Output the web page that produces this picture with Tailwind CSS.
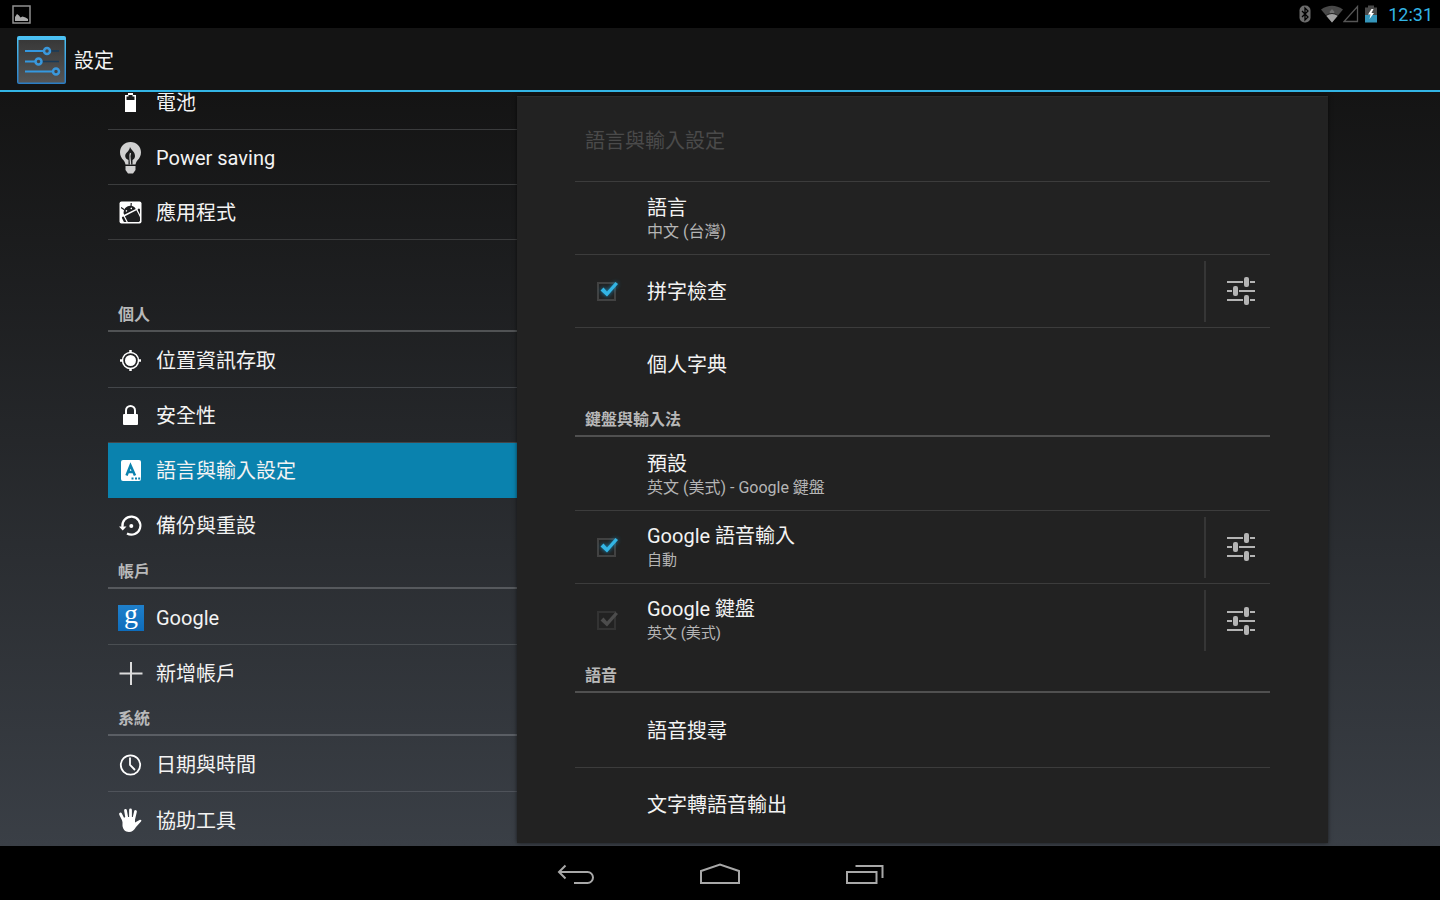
<!DOCTYPE html>
<html lang="zh-Hant">
  <head>
    <meta charset="UTF-8" />
    <meta name="viewport" content="width=device-width, initial-scale=1.0" />
    <title>設定</title>
    <script src="https://cdn.jsdelivr.net/npm/@tailwindcss/browser@4"></script>
  </head>

  <body class="flex h-screen flex-col overflow-hidden bg-black font-['Roboto','Noto_Sans_CJK_TC',sans-serif] text-xl text-[#f3f3f3]">
    <svg class="hidden">
      <symbol id="sliders" viewBox="0 0 28 30">
        <path d="M0 6h16M23 6h5M0 15h5M12 15h16M0 24h16M23 24h5" stroke="#b4b4b4" stroke-width="2" fill="none" />
        <rect x="17" y="1" width="5" height="10" rx="2" fill="#b4b4b4" />
        <rect x="6" y="10" width="5" height="10" rx="2" fill="#b4b4b4" />
        <rect x="17" y="19" width="5" height="10" rx="2" fill="#b4b4b4" />
      </symbol>
      <symbol id="tick" viewBox="0 0 24 24">
        <path d="M3.500 11.500 6.500 8.500l3.500 4L18.500 3l2.500 2L10 17.500z" fill="currentColor" />
      </symbol>
    </svg>

    <!-- status bar -->
    <div class="flex h-7 shrink-0 items-center bg-black pr-[7px] pl-3">
      <svg class="size-[19px]" viewBox="0 0 19 19">
        <rect x="1" y="1" width="17" height="17" fill="none" stroke="#909090" stroke-width="1.500" />
        <path d="M3 16v-4l2-3 2 1.500 1.500 2 2-1 3 1 2.500 1.500v2z" fill="#aaa" />
      </svg>
      <svg class="ml-auto h-[18px] w-3" viewBox="0 0 12 18">
        <rect x="0.500" y="0.500" width="11" height="17" rx="5" fill="#6c6c6c" />
        <path d="M3 6l6 6-3 3V3l3 3-6 6" fill="none" stroke="#000" stroke-width="1.300" />
      </svg>
      <svg class="ml-2.5 h-[18px] w-[22px]" viewBox="0 0 22 18">
        <path d="M0 4.500Q11-3 22 4.500L11 17.500z" fill="#484848" />
        <path d="M5 10.500Q11 6.500 17 10.500L11 17.500z" fill="#a0a0a0" />
        <path d="M8.500 7 11 4l2.500 3-1 2h-3z" fill="#707070" />
        <path d="M5 10.500Q11 6.500 17 10.500" fill="none" stroke="#222" stroke-width="1" />
      </svg>
      <svg class="h-[18px] w-4" viewBox="0 0 16 18">
        <path d="M14.500 1.500v15H1z" fill="none" stroke="#565656" stroke-width="1.300" />
      </svg>
      <svg class="ml-1.5 h-[18px] w-3" viewBox="0 0 12 18">
        <path d="M3 0.500h6v2h3V10H0V2.500h3z" fill="#4a4a4a" />
        <path d="M0 10h12v7.500H0z" fill="#3596bb" />
        <path d="M6.500 4 3 9.500h2.500L4.500 14 9 8H6.500L8.500 4z" fill="#fff" />
      </svg>
      <time class="ml-[11px] pt-0.5 text-lg leading-7 text-[#33b5e5]">12:31</time>
    </div>

    <!-- action bar -->
    <header class="flex h-16 shrink-0 items-center gap-2 border-b-2 border-[#33b5e5] bg-[#141414] pt-0.5 pl-4">
      <svg class="size-[50px]" viewBox="0 0 50 50">
        <defs>
          <linearGradient id="face" x2="0" y2="1">
            <stop offset="0" stop-color="#383838" />
            <stop offset="1" stop-color="#555" />
          </linearGradient>
          <linearGradient id="edge" x2="0" y2="1">
            <stop offset="0" stop-color="#4cc3f5" />
            <stop offset="1" stop-color="#2a7cc4" />
          </linearGradient>
        </defs>
        <rect x="1" y="1" width="49" height="48" rx="2" fill="url(#edge)" />
        <rect x="2.500" y="5" width="46" height="42.500" fill="url(#face)" />
        <path d="M30 16h13M23 26.500h20" stroke="#173a58" stroke-width="1.500" />
        <path d="M9 16h18M9 26.500h10M9 36.500h28" stroke="#3498e0" stroke-width="2" />
        <g fill="#444" stroke="#3a98dc" stroke-width="2.500">
          <circle cx="31" cy="16" r="3" />
          <circle cx="22.500" cy="26.500" r="3" />
          <circle cx="40" cy="36.500" r="3" />
        </g>
      </svg>
      <h1 class="pt-0.5">設定</h1>
    </header>

    <main class="grid min-h-0 flex-1 grid-cols-[409fr_811fr] overflow-hidden bg-linear-to-b from-[#141414] to-[#3a3f46] pr-28 pl-27">
      <!-- category list, scrolled part of a row down -->
      <nav class="-mt-[17px]">
        <a href="#" class="flex h-[55px] items-center border-b border-[#3b3c3d] pt-0.5 pl-2">
          <svg class="mr-3 size-7" viewBox="0 0 28 28">
            <path d="M12 4h5v2h3v17H9V6h3z" fill="#fff" />
            <path d="M12.500 6v1.500H10.500V11h8V7.500h-2V6z" fill="#1b1b1b" />
          </svg>
          電池
        </a>
        <a href="#" class="flex h-[55px] items-center border-b border-[#3b3c3d] pt-0.5 pl-2">
          <svg class="mr-3 h-8 w-7" viewBox="0 0 28 32">
            <path d="M14.500 0C8.500 0 4 4.500 4 10.300c0 3.500 1.500 6 3.500 8 1.200 1.200 1.500 2.700 2 4.200h10c.5-1.500.8-3 2-4.200 2-2 3.500-4.500 3.500-8C25 4.500 20.500 0 14.500 0z" fill="#d0d0d0" />
            <path d="M14 5c1 3 5 4.500 5 9 0 2-1 3.300-2.500 4v4.500h-4V18c-2-.7-3.300-2-3.300-4 0-3.500 4.300-4.500 4.800-9z" fill="#1a1b1c" />
            <path d="M14.500 11c-1.500 3.500 0 5.500 0 11.500" fill="none" stroke="#d0d0d0" stroke-width="1.300" />
            <path d="M9.500 24h10v4l-2.500 3.500h-5L9.500 28z" fill="#d0d0d0" />
          </svg>
          Power saving
        </a>
        <a href="#" class="flex h-[55px] items-center border-b border-[#3b3c3d] pt-0.5 pl-2">
          <svg class="mr-3 size-7" viewBox="0 0 28 28">
            <clipPath id="appbox"><rect x="5" y="4" width="19" height="19" rx="1" /></clipPath>
            <rect x="3.500" y="2.500" width="22" height="22" rx="2" fill="#fff" />
            <g clip-path="url(#appbox)">
              <g transform="rotate(-27 14 14)" fill="#1d1e20">
                <path d="M8 13a6.500 6 0 0 1 13 0z" />
                <path d="M10.500 8.500 8.500 5M18 8.500l2-3.500" stroke="#1d1e20" stroke-width="1.200" />
                <circle cx="11.800" cy="10.500" r="0.800" fill="#fff" />
                <circle cx="17.200" cy="10.500" r="0.800" fill="#fff" />
                <path d="M8 14.500h13V26H10a2 2 0 0 1-2-2z" />
                <rect x="4.500" y="14" width="2.300" height="9" rx="1.100" />
                <rect x="22.200" y="14" width="2.300" height="9" rx="1.100" />
              </g>
            </g>
          </svg>
          應用程式
        </a>

        <h2 class="mt-14 flex h-9 items-center border-b-2 border-[#505254] pt-1 pl-[10px] text-base font-bold text-[#b8b9ba]">個人</h2>
        <a href="#" class="flex h-14 items-center border-b border-[#43464a] pt-0.5 pl-2">
          <svg class="mr-3 size-7" viewBox="0 0 28 28">
            <circle cx="14.500" cy="13.500" r="8" fill="none" stroke="#fff" stroke-width="1.500" />
            <circle cx="14.500" cy="13.500" r="5.500" fill="#fff" />
            <path d="M14.500 3v3M14.500 21v3M4 13.500h3M22 13.500h3" stroke="#fff" stroke-width="2.500" />
          </svg>
          位置資訊存取
        </a>
        <a href="#" class="flex h-[55px] items-center border-b border-[#43464a] pt-0.5 pl-2">
          <svg class="mr-3 size-7" viewBox="0 0 28 28">
            <path d="M10 13V8.500a4.500 4.500 0 0 1 9 0V13" fill="none" stroke="#fff" stroke-width="2" />
            <rect x="7" y="12" width="15" height="11" rx="1" fill="#fff" />
          </svg>
          安全性
        </a>
        <a href="#" aria-current="page" class="flex h-[55px] items-center bg-[#0a82ae] pl-2">
          <svg class="mr-3 size-7" viewBox="0 0 28 28">
            <rect x="5" y="3" width="20" height="21" rx="2" fill="#fff" />
            <path d="M10.500 18.500 14.500 8.500l4.500 10M12 15h5.500" fill="none" stroke="#0a82ae" stroke-width="2.500" />
            <path d="M15.500 20.500h2v2h-2zM19 20.500h2v2h-2zM22.200 20.500h2v2h-2z" fill="#0a82ae" />
          </svg>
          語言與輸入設定
        </a>
        <a href="#" class="flex h-[55px] items-center pl-2">
          <svg class="mr-3 size-7" viewBox="0 0 28 28">
            <path d="M6.500 15A9 9 0 1 1 11 21.500" fill="none" stroke="#fff" stroke-width="2.200" />
            <path d="M3 14.500h7.500L6.700 18.500z" fill="#fff" />
            <circle cx="15.300" cy="14" r="2" fill="#fff" />
          </svg>
          備份與重設
        </a>

        <h2 class="flex h-9 items-center border-b-2 border-[#56595d] pt-1 pl-[10px] text-base font-bold text-[#b8b9ba]">帳戶</h2>
        <a href="#" class="flex h-14 items-center border-b border-[#4a4e52] pt-0.5 pl-2">
          <span aria-hidden="true" class="mr-3 ml-0.5 flex size-[26px] items-center justify-center bg-linear-to-b from-[#1f80cb] to-[#0d6cbb] pb-2 font-['Liberation_Serif',serif] text-[28px] leading-none text-white">g</span>
          Google
        </a>
        <a href="#" class="flex h-[55px] items-center pt-0.5 pl-2">
          <svg class="mr-3 size-7" viewBox="0 0 28 28">
            <path d="M15 2v23M3.500 13.500h23" stroke="#dcdcdc" stroke-width="2" />
          </svg>
          新增帳戶
        </a>

        <h2 class="flex h-9 items-center border-b-2 border-[#5a5e64] pt-1 pl-[10px] text-base font-bold text-[#b8b9ba]">系統</h2>
        <a href="#" class="flex h-14 items-center border-b border-[#4f535a] pt-0.5 pl-2">
          <svg class="mr-3 size-7" viewBox="0 0 28 28">
            <circle cx="14.500" cy="14" r="9.700" fill="none" stroke="#fff" stroke-width="1.800" />
            <path d="M14 6.500V14l5 5" fill="none" stroke="#fff" stroke-width="1.800" />
          </svg>
          日期與時間
        </a>
        <a href="#" class="flex h-[55px] items-center pt-0.5 pl-2">
          <svg class="mr-3 size-7" viewBox="0 0 28 28">
            <path d="M8 14 4.500 7M11 12 9.500 3.500M14.500 12V3M17.500 13l2-8.500" stroke="#fff" stroke-width="2.800" stroke-linecap="round" />
            <path d="M6.500 12.500 9 10h10v5.500l4.500-2.500c1.500-.5 2.500.5 1.500 1.500L20 20c-2 3.500-4 5-7 5-4 0-6-3-6.500-6z" fill="#fff" />
          </svg>
          協助工具
        </a>
      </nav>

      <!-- detail panel -->
      <section class="my-1 overflow-hidden border-t border-[#2b2b2b] bg-[#222] pr-[58px] pl-[58px] shadow-[0_0_4px_rgba(0,0,0,0.6)]">
        <h2 class="flex h-[85px] items-center border-b border-[#3c3c3c] pt-1 pl-[10px] text-[#4a4a4a]">語言與輸入設定</h2>
        <a href="#" class="flex h-[73px] flex-col justify-center border-b border-[#3c3c3c] pl-18">
          <span class="leading-7">語言</span>
          <span class="text-base leading-5 text-[#b5b5b5]">中文 (台灣)</span>
        </a>
        <div class="flex h-[73px] items-center border-b border-[#3c3c3c]">
          <label for="spell" class="flex flex-1 items-center">
            <span class="ml-5 grid w-[52px] items-center">
              <input id="spell" type="checkbox" checked class="peer col-start-1 row-start-1 ml-0.5 size-[19px] appearance-none border-2 border-[#424242]" />
              <svg class="invisible col-start-1 row-start-1 ml-0.5 size-6 text-[#33b5e5] drop-shadow-[0_0_2px_#1687b5] peer-checked:visible"><use href="#tick" /></svg>
            </span>
            <span class="pt-0.5">拼字檢查</span>
          </label>
          <button type="button" aria-label="拼字檢查設定" class="flex h-[61px] w-[66px] items-center border-l-2 border-[#363636] pl-[21px]">
            <svg class="h-[30px] w-7"><use href="#sliders" /></svg>
          </button>
        </div>
        <a href="#" class="flex h-[73px] items-center pl-18">個人字典</a>

        <h3 class="flex h-9 items-center border-b-2 border-[#505050] pt-1 pl-[10px] text-base font-bold text-[#b8b8b8]">鍵盤與輸入法</h3>
        <a href="#" class="flex h-[74px] flex-col justify-center border-b border-[#3c3c3c] pl-18">
          <span class="leading-7">預設</span>
          <span class="text-base leading-5 text-[#b5b5b5]">英文 (美式) - Google 鍵盤</span>
        </a>
        <div class="flex h-[73px] items-center border-b border-[#3c3c3c]">
          <label for="voice" class="flex flex-1 items-center">
            <span class="ml-5 grid w-[52px] items-center">
              <input id="voice" type="checkbox" checked class="peer col-start-1 row-start-1 ml-0.5 size-[19px] appearance-none border-2 border-[#424242]" />
              <svg class="invisible col-start-1 row-start-1 ml-0.5 size-6 text-[#33b5e5] drop-shadow-[0_0_2px_#1687b5] peer-checked:visible"><use href="#tick" /></svg>
            </span>
            <span class="flex flex-col pb-0.5">
              <span class="leading-7">Google 語音輸入</span>
              <span class="text-[15px] leading-5 text-[#b5b5b5]">自動</span>
            </span>
          </label>
          <button type="button" aria-label="Google 語音輸入設定" class="flex h-[61px] w-[66px] items-center border-l-2 border-[#363636] pl-[21px]">
            <svg class="h-[30px] w-7"><use href="#sliders" /></svg>
          </button>
        </div>
        <div class="flex h-[73px] items-center">
          <label for="keyboard" class="flex flex-1 items-center">
            <span class="ml-5 grid w-[52px] items-center">
              <input id="keyboard" type="checkbox" checked disabled class="peer col-start-1 row-start-1 ml-0.5 size-[19px] appearance-none border-2 border-[#333]" />
              <svg class="invisible col-start-1 row-start-1 ml-0.5 size-6 text-[#4c4c4c] peer-checked:visible"><use href="#tick" /></svg>
            </span>
            <span class="flex flex-col pb-1">
              <span class="leading-7">Google 鍵盤</span>
              <span class="text-[15px] leading-5 text-[#b5b5b5]">英文 (美式)</span>
            </span>
          </label>
          <button type="button" aria-label="Google 鍵盤設定" class="flex h-[61px] w-[66px] items-center border-l-2 border-[#363636] pl-[21px]">
            <svg class="h-[30px] w-7"><use href="#sliders" /></svg>
          </button>
        </div>

        <h3 class="flex h-9 items-center border-b-2 border-[#505050] pt-1 pl-[10px] text-base font-bold text-[#b8b8b8]">語音</h3>
        <a href="#" class="flex h-[75px] items-center border-b border-[#3c3c3c] pt-0.5 pl-18">語音搜尋</a>
        <a href="#" class="flex h-[73px] items-center pl-18">文字轉語音輸出</a>
      </section>
    </main>

    <!-- system buttons -->
    <footer class="flex h-[54px] shrink-0 items-center justify-center gap-[104px] bg-black pt-0.5">
      <button type="button" aria-label="返回">
        <svg class="h-6 w-10" viewBox="0 0 40 24" fill="none" stroke="#a8a8a8" stroke-width="2">
          <path d="M9.500 3.500 3 10l6.500 6.500M3 10h28.500a5.500 5.500 0 0 1 0 11H18" />
        </svg>
      </button>
      <button type="button" aria-label="主畫面">
        <svg class="h-6 w-10" viewBox="0 0 40 24" fill="none" stroke="#a8a8a8" stroke-width="2">
          <path d="M1 21V9L20 2.500 39 9v12z" />
        </svg>
      </button>
      <button type="button" aria-label="最近使用的應用程式">
        <svg class="h-6 w-10" viewBox="0 0 40 24" fill="none" stroke="#a8a8a8" stroke-width="2">
          <path d="M3 10h29.500v11H3zM11.500 4h27V16" />
        </svg>
      </button>
    </footer>
  </body>
</html>
